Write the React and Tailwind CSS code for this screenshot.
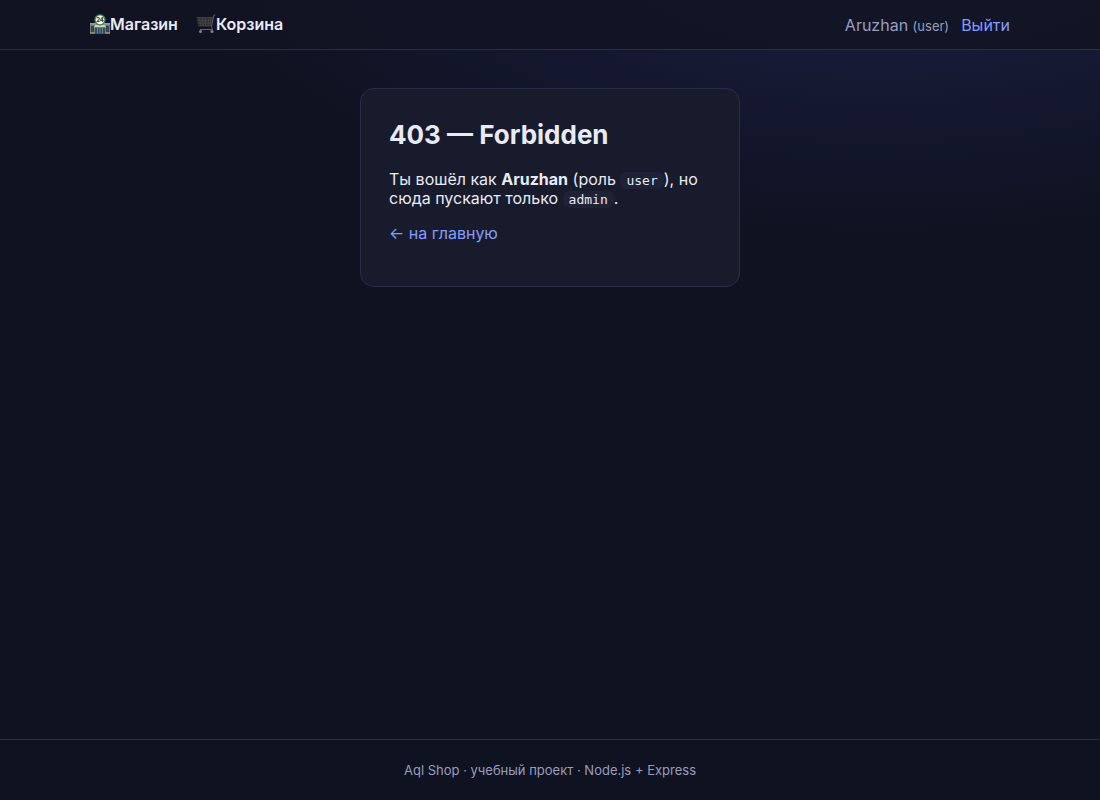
import React from 'react';

const links = [
  { href: '/', label: 'Магазин', Icon: StoreIcon },
  { href: '/cart', label: 'Корзина', Icon: CartIcon },
];

export default function App() {
  return (
    <div
      style={{ fontFamily: "Inter, 'Liberation Sans', sans-serif" }}
      className="min-h-screen flex flex-col text-base text-[#e8eaf6] bg-[#0f1220] bg-[radial-gradient(1200px_540px_at_80%_-10%,#1c2044_0%,transparent_60%)] bg-no-repeat"
    >
      <header className="border-b border-[#2a2d47] bg-[#121423]/85">
        <div className="max-w-[960px] mx-auto px-5 pt-3 pb-[11px] flex items-start justify-between">
          <nav className="flex gap-[18px] font-semibold">
            {links.map(({ href, label, Icon }) => (
              <a key={href} href={href} className="flex items-center">
                <Icon />
                {label}
              </a>
            ))}
          </nav>

          <div className="flex items-baseline gap-3 leading-[26px]">
            <span className="text-[#9a9dbd]">
              Aruzhan <small className="text-[13px] leading-none">(user)</small>
            </span>
            <a href="/logout" className="text-[#859cff]">Выйти</a>
          </div>
        </div>
      </header>

      <main className="flex-1 w-full px-5 py-[38px]">
        <section className="max-w-[380px] mx-auto px-7 pt-7 pb-[43px] rounded-[14px] border border-[#2a2d47] bg-[#181b2b]">
          <h1 className="text-[26px] leading-9 font-bold mb-[17px]">403 — Forbidden</h1>
          <p className="leading-[19px] mb-4">
            Ты вошёл как <b className="font-bold">Aruzhan</b> (роль <Code>user</Code>), но сюда пускают только <Code>admin</Code>.
          </p>
          <p className="leading-[19px]">
            <a href="/" className="text-[#859cff]">← на главную</a>
          </p>
        </section>
      </main>

      <footer className="border-t border-[#2a2d47] py-5 text-center text-[13px] leading-5 text-[#9a9dbd]">
        Aql Shop · учебный проект · Node.js + Express
      </footer>
    </div>
  );
}

const Code = ({ children }) => (
  <code
    style={{ fontFamily: "'DejaVu Sans Mono', 'Liberation Mono', monospace" }}
    className="bg-[#1f2237] rounded-md px-[6px] py-px text-[13px] leading-none"
  >
    {children}
  </code>
);

// 24h store
function StoreIcon() {
  return (
    <svg viewBox="0 0 20 20" className="w-5 h-5" aria-hidden="true">
      <rect x="0" y="9" width="20" height="10.5" fill="#6f7a78" />
      <rect x="0" y="9" width="20" height="1.6" fill="#9aa093" />
      <rect x="1" y="12" width="3" height="6" fill="#394449" />
      <rect x="16" y="12" width="3" height="6" fill="#394449" />
      <path d="M5 11h10l1 2.500H4z" fill="#d3cfa9" />
      <rect x="5" y="13.5" width="10" height="6" fill="#2d4c62" />
      <path d="M7.5 13.500v6M10 13.500v6M12.500 13.500v6" stroke="#7fa0b0" strokeWidth="0.7" />
      <rect x="0" y="18.6" width="5" height="1" fill="#a9a58d" />
      <rect x="15" y="18.6" width="5" height="1" fill="#a9a58d" />
      <circle cx="10" cy="5.8" r="5" fill="#f2f5f2" stroke="#3c8350" strokeWidth="1.3" />
      <text x="10" y="8" textAnchor="middle" fontSize="6" fontWeight="700" fill="#27303c">24</text>
    </svg>
  );
}

function CartIcon() {
  return (
    <svg viewBox="0 0 20 20" className="w-5 h-5" fill="none" aria-hidden="true">
      <path d="M0.500 3.500h16l-1.500 8.500H2.500z" fill="#2c2c31" />
      <path d="M0.500 3.500h16.500M1 6.300h15.500M1.500 9h14.500M2.500 12h13M3.500 3.500l1.200 8.500M6.500 3.500l.7 8.500M9.500 3.500V12M12.500 3.500L12 12M15 3.500L14 12" stroke="#4c4b4e" strokeWidth="0.7" />
      <path d="M19.500.8L17.800 1.500 15.500 12.500 16.500 15.500H4" stroke="#66605f" strokeWidth="1" />
      <circle cx="4.5" cy="17.5" r="1.5" fill="#8a8178" />
      <circle cx="16" cy="17.5" r="1.5" fill="#8a8178" />
    </svg>
  );
}
